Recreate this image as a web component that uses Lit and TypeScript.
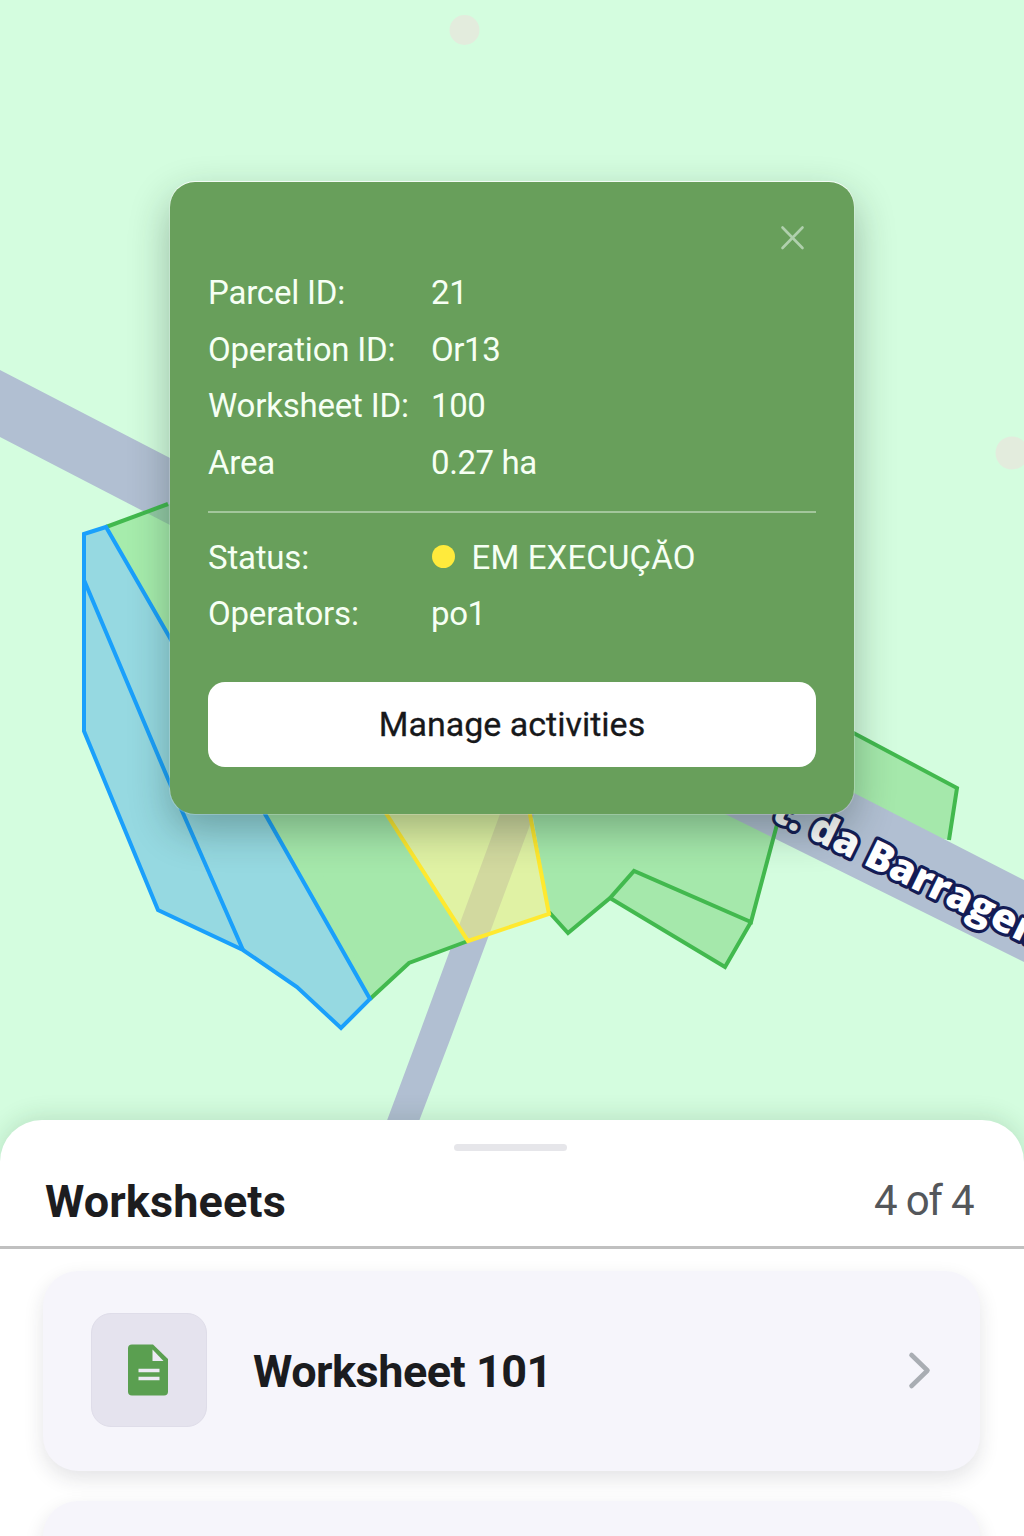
import { LitElement, html, svg, css } from "lit";
import { customElement, property } from "lit/decorators.js";

interface Shape {
  cls: string;
  points: string;
}

const fieldsUnderRoad: Shape[] = [
  { cls: "green-fill", points: "265,814 386,814 468,941 409,963 370,999" },
  { cls: "green-fill", points: "530,800 784,800 778,823 751,922 634,871 610,898 568,933 549,912" },
  { cls: "green-fill", points: "634,871 751,922 725,967 610,898" },
  { cls: "green-fill", points: "840,726 854,733 957,788 949,840 840,820" },
];

const fieldsOverRoad: Shape[] = [
  { cls: "green-fill", points: "106,527 168,504 200,500 200,690 170,638" },
  { cls: "yellow-fill", points: "386,814 468,941 549,914 530,814" },
  {
    cls: "blue-fill",
    points: "84,534 106,527 170,638 265,814 370,999 341,1028 297,987 243,950 158,910 84,731",
  },
];

const outlines: Shape[] = [
  { cls: "green-line", points: "106,527 168,504" },
  { cls: "green-line", points: "370,999 409,963 468,941" },
  { cls: "green-line", points: "549,912 568,933 610,898 634,871 751,922 779,817" },
  { cls: "green-line", points: "610,898 725,967 751,922" },
  { cls: "green-line", points: "846,729 957,788 949,840" },
  { cls: "yellow-line", points: "382,807 468,941 549,914 528,804" },
  { cls: "blue-line", points: "84,580 168,779 243,950" },
];

@customElement("field-map")
class FieldMap extends LitElement {
  static styles = css`
    :host { display: block; width: 1024px; height: 1150px; }
    .map { display: block; background: #d4fddf; }
    .spot { fill: #e3ecdd; }
    .road { fill: #b1bfd2; }
    .green-fill { fill: #a5e8ab; }
    .over .green-fill { fill: rgba(110, 216, 110, 0.45); }
    .yellow-fill { fill: rgba(232, 235, 125, 0.6); }
    .blue-fill { fill: #96d9e1; }
    .green-line, .yellow-line, .blue-line { fill: none; stroke-width: 4; stroke-linejoin: miter; }
    .green-line { stroke: #42b94e; }
    .yellow-line { stroke: #ffe92f; }
    .blue-line { stroke: #1aa0fb; }
    .road-name {
      font: 800 40px "Open Sans", "Noto Sans", sans-serif;
      letter-spacing: 0.2px;
      fill: #fff;
      stroke: #141c55;
      stroke-width: 6.5px;
      stroke-linejoin: round;
      paint-order: stroke;
    }
  `;

  render() {
    const fill = (s: Shape) => svg`<polygon class=${s.cls} points=${s.points} />`;
    const line = (s: Shape) => svg`<polyline class=${s.cls} points=${s.points} />`;
    return html`
      <svg class="map" width="1024" height="1150" viewBox="0 0 1024 1150">
        <circle class="spot" cx="464.500" cy="30" r="15" />
        <circle class="spot" cx="1012" cy="453" r="16.500" />
        ${fieldsUnderRoad.map(fill)}
        <polygon class="road" points="500,814 534,814 450,1040 408,1150 376,1150 417,1040" />
        <polygon class="green-fill" points="300,814 386,814 468,941 409,963 370,999" />
        <polygon
          class="road"
          points="0,370 170,458 854,793 1024,880 1024,962 725,814 170,525 0,437"
        />
        <g class="over">${fieldsOverRoad.map(fill)}</g>
        ${outlines.map(line)}
        <polygon
          class="blue-line"
          points="84,534 106,527 170,638 265,814 370,999 341,1028 297,987 243,950 158,910 84,731"
        />
        <text class="road-name" transform="translate(770 819) rotate(26)">t. da Barragem</text>
      </svg>
    `;
  }
}

@customElement("parcel-popup")
class ParcelPopup extends LitElement {
  static styles = css`
    :host { display: block; font-family: Roboto, "Liberation Sans", sans-serif; }
    .popup {
      box-sizing: border-box;
      width: 684px;
      height: 632px;
      padding: 38px 38px 0;
      border-radius: 25px;
      background: #689f5b;
      box-shadow: 0 -1px 0 0 rgba(255, 255, 255, 0.7), 0 0 0 1px rgba(255, 255, 255, 0.22),
        0 16px 40px rgba(20, 40, 30, 0.32);
      color: #f6fff4;
      display: flex;
      flex-direction: column;
    }
    .top { display: flex; justify-content: flex-end; height: 44px; padding-right: 8.5px; }
    .close { width: 32px; height: 36px; }
    .row {
      display: grid;
      grid-template-columns: 223px 1fr;
      align-items: center;
      height: 56.5px;
      font-size: 33px;
      line-height: 56px;
      white-space: nowrap;
    }
    .label { letter-spacing: -0.2px; }
    .value { display: flex; align-items: center; letter-spacing: -0.4px; }
    .status { display: flex; align-items: center; letter-spacing: 0.15px; }
    .dot { width: 23px; height: 23px; margin: 0 17px 2px 0.5px; border-radius: 50%; background: #ffea3c; }
    .rule { height: 2px; margin: 20px 0 16.5px; background: #a3c69c; }
    .info { display: flex; flex-direction: column; margin-top: 1px; }
    .manage {
      height: 85px;
      margin: 39.5px 0 0;
      padding: 0 0 2px;
      border: 0;
      border-radius: 17px;
      background: #fff;
      color: #17181a;
      font: 400 34px Roboto, "Liberation Sans", sans-serif;
      -webkit-text-stroke: 0.3px #17181a;
    }
  `;

  render() {
    const row = (label: string, value: unknown) => html`
      <div class="row"><span class="label">${label}</span><span class="value">${value}</span></div>
    `;
    return html`
      <section class="popup">
        <div class="top">
          <svg class="close" viewBox="0 0 32 36" fill="none" stroke="#b0d0ad" stroke-width="2.6" stroke-linecap="round">
            <path d="M6.500 7.500l20 20.500M26.500 7.500l-20 20.500" />
          </svg>
        </div>
        <div class="info">
          ${row("Parcel ID:", "21")} ${row("Operation ID:", "Or13")}
          ${row("Worksheet ID:", "100")} ${row("Area", "0.27 ha")}
        </div>
        <div class="rule"></div>
        <div>
          ${row("Status:", html`<span class="status"><i class="dot"></i>EM EXECUÇĂO</span>`)}
          ${row("Operators:", "po1")}
        </div>
        <button class="manage">Manage activities</button>
      </section>
    `;
  }
}

@customElement("worksheet-card")
class WorksheetCard extends LitElement {
  @property() name = "";

  static styles = css`
    :host { display: block; font-family: Roboto, "Liberation Sans", sans-serif; }
    .card {
      box-sizing: border-box;
      display: flex;
      align-items: center;
      height: 200px;
      padding: 0 48px 2px;
      border-radius: 35px;
      background: #f6f5fb;
      box-shadow: 0 8px 20px rgba(30, 30, 50, 0.12);
    }
    .tile {
      box-sizing: border-box;
      display: flex;
      align-items: center;
      justify-content: center;
      width: 116px;
      height: 114px;
      border: 1px solid #dfdde9;
      border-radius: 20px;
      background: #e5e3ee;
    }
    .doc { width: 42px; height: 54px; margin-right: 2px; }
    .name {
      flex: 1;
      margin-left: 46px;
      padding-top: 2px;
      font-size: 45px;
      font-weight: 700;
      letter-spacing: -0.5px;
      color: #1b1c1f;
    }
    .chevron { width: 26px; height: 40px; }
  `;

  render() {
    return html`
      <article class="card">
        <div class="tile">
          <svg class="doc" viewBox="0 0 42 54">
            <path
              d="M5 1.500H26L41 16V48.500Q41 52.500 37 52.500H5Q1 52.500 1 48.500V5.500Q1 1.500 5 1.500Z"
              fill="#5a9f50"
            />
            <path d="M25.500 6.500V18H36.500Z" fill="#eceaf4" />
            <path d="M11.500 27.500H32.500M11.500 35.500H32.500" stroke="#eceaf4" stroke-width="3.400" />
          </svg>
        </div>
        <span class="name">${this.name}</span>
        <svg class="chevron" viewBox="0 0 26 40" fill="none" stroke="#a9adb3" stroke-width="4.600" stroke-linecap="round" stroke-linejoin="round">
          <path d="M5.500 5L21.500 20.500L5.500 36" />
        </svg>
      </article>
    `;
  }
}

@customElement("app-root")
class AppRoot extends LitElement {
  static styles = css`
    :host { display: block; font-family: Roboto, "Liberation Sans", sans-serif; }
    .screen {
      position: relative;
      width: 1024px;
      height: 1536px;
      overflow: hidden;
      background: #d4fddf;
    }
    .popup { position: absolute; left: 170px; top: 182px; }
    .map { position: absolute; left: 0; top: 0; }
    .sheet {
      position: absolute;
      left: 0;
      right: 0;
      top: 1120px;
      bottom: 0;
      border-radius: 42px 42px 0 0;
      background: #fff;
      box-shadow: 0 -3px 24px rgba(20, 60, 30, 0.14);
    }
    .grip { width: 113px; height: 7px; margin: 24px auto 0 454px; border-radius: 4px; background: #e6e6ea; }
    .head {
      display: flex;
      justify-content: space-between;
      align-items: center;
      box-sizing: border-box;
      height: 98px;
      padding: 4px 51px 0 45px;
      border-bottom: 3px solid #c0c0c0;
    }
    .title { margin: 0; padding-top: 1px; font-size: 45px; font-weight: 700; letter-spacing: 0.1px; color: #1d1d1f; }
    .count { font-size: 42px; letter-spacing: -1.6px; word-spacing: 1px; color: #54575b; }
    .list { display: flex; flex-direction: column; gap: 30px; padding: 22px 44px 0 43px; }
  `;

  render() {
    return html`
      <main class="screen">
        <field-map class="map"></field-map>
        <parcel-popup class="popup"></parcel-popup>
        <section class="sheet">
          <div class="grip"></div>
          <header class="head">
            <h1 class="title">Worksheets</h1>
            <span class="count">4 of 4</span>
          </header>
          <div class="list">
            <worksheet-card name="Worksheet 101"></worksheet-card>
            <worksheet-card></worksheet-card>
          </div>
        </section>
      </main>
    `;
  }
}
